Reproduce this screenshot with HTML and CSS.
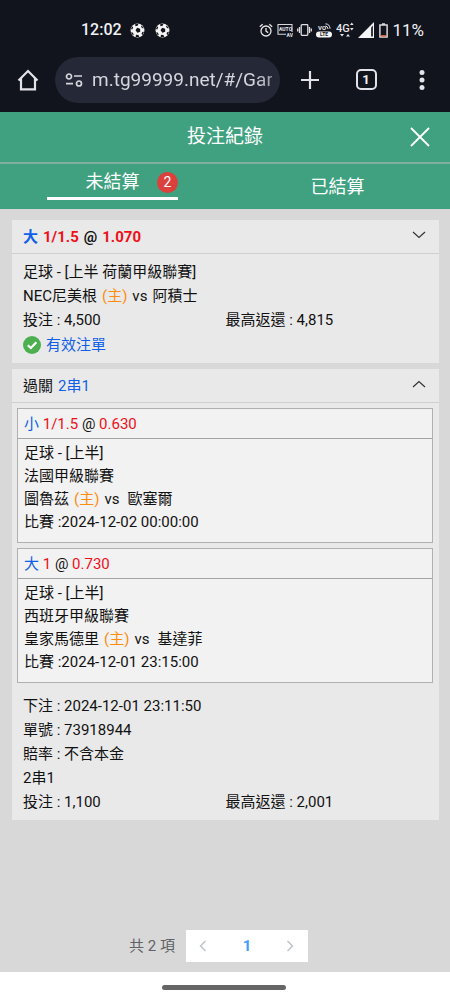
FILE: index.html
```html
<!DOCTYPE html>
<html lang="zh-Hant">
<head>
<meta charset="utf-8">
<meta name="viewport" content="width=device-width, initial-scale=1">
<title>投注紀錄</title>
<link rel="stylesheet" href="styles.css">
</head>
<body>
<svg class="defs" width="0" height="0" aria-hidden="true">
  <symbol id="ball" viewBox="0 0 16 16">
    <circle cx="8" cy="8" r="7.4" fill="#f4f4f4"/>
    <g fill="#11141c">
      <path d="M7.6 5.1 10.8 6 10.9 9.2 7.9 10.4 5.9 7.8z"/>
      <path d="M5.4 1.2 9 .9 8.1 3 5.8 3.4z"/>
      <path d="M12.4 2.6 14.8 5.6 13.3 5.7 11.7 4z"/>
      <path d="M15 9.3 13.2 13 12.3 11.4 13.2 9.6z"/>
      <path d="M6.4 12.6 9 12.9 9.9 15 6 15z"/>
      <path d="M1 9.9 2.8 10 4 12.2 3.2 13.4z"/>
      <path d="M.9 6.5 2.6 3.4 3.4 4.8 2.3 7z"/>
    </g>
  </symbol>
</svg>

<header class="device">
  <div class="status">
    <span class="status-time">12:02</span>
    <svg class="ball" width="15" height="15"><use href="#ball"/></svg>
    <svg class="ball" width="15" height="15"><use href="#ball"/></svg>
    <div class="status-icons">
      <svg width="14" height="15" viewBox="0 0 14 15" fill="none" stroke="#e8e8ec" stroke-width="1.3"><circle cx="7" cy="8" r="5"/><path d="M7 5v3.2l2.2 1.4M.8 3.8 3.7 1.3M13.2 3.8 10.3 1.3"/></svg>
      <svg width="16" height="14" viewBox="0 0 16 14"><path d="M9 11.3H1V1.500H15V9" fill="none" stroke="#d8d8dc" stroke-width="1.1"/><text x="2" y="8" class="tiny">AUTO</text><text x="9.500" y="13.500" class="tiny">AV</text></svg>
      <svg width="15" height="14" viewBox="0 0 15 14" fill="none" stroke="#e0e0e4" stroke-width="1.3"><rect x="4.200" y="1.700" width="6.600" height="10.600" rx=".8"/><path d="M2.500 4v6M12.500 4v6M.7 5.500v3M14.300 5.500v3"/></svg>
      <svg width="16" height="15" viewBox="0 0 16 15"><text x="2" y="7" class="volte">VO</text><path d="M9.500 .8a5 5 0 0 1 4.500 5M9.500 3a3 3 0 0 1 2.500 3" fill="none" stroke="#e8e8ec"/><rect x="0" y="8.500" width="16" height="6" rx="3" fill="#f4f4f6"/><text x="4" y="13.400" class="lte">LTE</text></svg>
      <svg width="18" height="16" viewBox="0 0 18 16"><text x="0" y="9.500" class="net">4G</text><path d="M15.800 .5l1.800 2.500h-3.600zM15.800 8.500l1.800-2.500h-3.600z" fill="#e8e8ec"/><path d="M4 12h4l-2 2.500zM10 14.500h4L12 12z" fill="#e8e8ec"/></svg>
      <svg width="17" height="16" viewBox="0 0 17 16"><path d="M0 16 16 0V16z" fill="#f4f4f6"/><path d="M13 5.500 15 3.500V14.500H13z" fill="#35373e"/></svg>
      <svg width="9" height="15" viewBox="0 0 9 15"><path d="M3 .3h3v1.500H3z" fill="#eee"/><rect x=".9" y="2" width="7.200" height="12" fill="none" stroke="#e8e8ec" stroke-width="1.400"/><path d="M1.600 12h5.800v1.400H1.600z" fill="#d9613b"/></svg>
      <span class="status-level">11%</span>
    </div>
  </div>
  <div class="toolbar">
    <button class="tool home" aria-label="Home"><svg width="22" height="22" viewBox="0 0 22 22" fill="none" stroke="#e2e2e8" stroke-width="2.200"><path d="M1.500 11.500 11 2l9.500 9.500M4 9.500V20.300H18V9.500"/></svg></button>
    <div class="address">
      <svg width="18" height="14" viewBox="0 0 18 14" fill="none" stroke="#d5d6de" stroke-width="1.700"><circle cx="4" cy="3.500" r="2.500"/><path d="M9 3h8M1 10.700h7"/><circle cx="14" cy="10.500" r="2.500"/></svg>
      <input class="url" type="text" value="m.tg99999.net/#/Game" aria-label="URL">
    </div>
    <button class="tool" aria-label="New tab"><svg width="20" height="20" viewBox="0 0 20 20" stroke="#e2e2e8" stroke-width="2.200"><path d="M10 1v18M1 10h18"/></svg></button>
    <button class="tool" aria-label="Tabs"><span class="tab-count">1</span></button>
    <button class="tool" aria-label="Menu"><svg width="6" height="20" viewBox="0 0 6 20" fill="#e2e2e8"><circle cx="3" cy="2.600" r="2.500"/><circle cx="3" cy="10" r="2.500"/><circle cx="3" cy="17.400" r="2.500"/></svg></button>
  </div>
</header>

<div class="title-bar">
  <h1 class="title">投注紀錄</h1>
  <button class="close" aria-label="關閉"><svg width="20" height="20" viewBox="0 0 20 20" stroke="#fff" stroke-width="1.800"><path d="M1 1l18 18M19 1 1 19"/></svg></button>
</div>
<nav class="tabs">
  <button class="tab active"><span class="tab-line">未結算<span class="badge">2</span></span></button>
  <button class="tab">已結算</button>
</nav>

<main class="records">
  <section class="card">
    <button class="card-head"><span class="pick"><span class="blue">大</span><span class="red">1/1.5</span><span>@</span><span class="red">1.070</span></span>
      <svg width="14" height="8" viewBox="0 0 14 8" fill="none" stroke="#333" stroke-width="1.200"><path d="M1 1l6 5.500L13 1"/></svg></button>
    <div class="card-body">
      <p>足球 - [上半 荷蘭甲級聯賽]</p>
      <p class="match"><span>NEC尼美根</span><span class="orange">(主)</span><span>vs</span><span>阿積士</span></p>
      <p class="split"><span>投注 : 4,500</span><span>最高返還 : 4,815</span></p>
      <p class="valid"><svg width="18" height="18" viewBox="0 0 18 18"><circle cx="9" cy="9" r="9" fill="#4caf50"/><path d="M4.800 9.300 7.800 12l5.600-5.800" fill="none" stroke="#fff" stroke-width="2.200"/></svg><span class="blue">有效注單</span></p>
    </div>
  </section>

  <section class="card">
    <button class="card-head"><span class="combo">過關<span class="blue">2串1</span></span>
      <svg width="14" height="8" viewBox="0 0 14 8" fill="none" stroke="#333" stroke-width="1.200"><path d="M1 7l6-5.500L13 7"/></svg></button>
    <div class="legs">
      <article class="leg">
        <p class="leg-head"><span class="blue">小</span> <span class="red">1/1.5</span> @ <span class="red">0.630</span></p>
        <div class="leg-body">
          <p>足球 - [上半]</p>
          <p>法國甲級聯賽</p>
          <p class="match"><span>圖魯茲</span><span class="orange">(主)</span><span>vs</span><span class="away">歐塞爾</span></p>
          <p>比賽 :2024-12-02 00:00:00</p>
        </div>
      </article>
      <article class="leg">
        <p class="leg-head"><span class="blue">大</span> <span class="red">1</span> @ <span class="red">0.730</span></p>
        <div class="leg-body">
          <p>足球 - [上半]</p>
          <p>西班牙甲級聯賽</p>
          <p class="match"><span>皇家馬德里</span><span class="orange">(主)</span><span>vs</span><span class="away">基達菲</span></p>
          <p>比賽 :2024-12-01 23:15:00</p>
        </div>
      </article>
    </div>
    <div class="card-body summary">
      <p>下注 : 2024-12-01 23:11:50</p>
      <p>單號 : 73918944</p>
      <p>賠率 : 不含本金</p>
      <p>2串1</p>
      <p class="split"><span>投注 : 1,100</span><span>最高返還 : 2,001</span></p>
    </div>
  </section>

  <nav class="pagination" aria-label="分頁">
    <span class="total">共 2 項</span>
    <div class="pager">
      <button aria-label="上一頁"><svg width="8" height="12" viewBox="0 0 8 12" fill="none" stroke="#c0c4cc" stroke-width="1.500"><path d="M6.500 1l-5 5 5 5"/></svg></button>
      <button class="current">1</button>
      <button aria-label="下一頁"><svg width="8" height="12" viewBox="0 0 8 12" fill="none" stroke="#c0c4cc" stroke-width="1.500"><path d="M1.500 1l5 5-5 5"/></svg></button>
    </div>
  </nav>
</main>
<footer class="gesture"><span class="gesture-bar"></span></footer>
</body>
</html>
```

FILE: styles.css
```css
* { box-sizing: border-box; }

body {
  margin: 0;
  min-height: 100vh;
  display: flex;
  flex-direction: column;
  background: #d8d8d8;
  color: #111;
  font: 15px/24px Roboto, "Noto Sans CJK TC", sans-serif;
}

p, h1 { margin: 0; }

button {
  margin: 0;
  padding: 0;
  border: 0;
  background: none;
  color: inherit;
  font: inherit;
}

svg { display: block; flex: none; }
.defs { position: absolute; }

.blue { color: #0f5fe8; }
.red { color: #ee1018; }
.orange { color: #ff8c10; }

/* Device status bar and browser toolbar */
.device {
  padding-top: 15px;
  background: #11141c;
  color: #f0f0f4;
}

.status {
  display: flex;
  align-items: center;
  height: 30px;
  padding: 0 26px 0 81px;
}

.status-time { font-size: 16px; font-weight: 500; margin-right: 8px; }
.ball { margin-right: 10px; }

.status-icons {
  display: flex;
  align-items: center;
  gap: 4px;
  margin-left: auto;
}

.status-level { font-size: 17px; }
.tiny { font: 700 5px Roboto, sans-serif; fill: #e8e8ec; }
.volte { font: 700 6px Roboto, sans-serif; fill: #e8e8ec; }
.lte { font: 700 5px Roboto, sans-serif; fill: #11141c; }
.net { font: 500 11px Roboto, sans-serif; fill: #e8e8ec; }

.toolbar {
  display: flex;
  align-items: center;
  height: 67px;
  padding-top: 2px;
}

.tool {
  display: flex;
  flex: 0 0 56px;
  align-items: center;
  justify-content: center;
  height: 48px;
}

.home { flex-basis: 55px; }

.address {
  display: flex;
  flex: 1;
  align-items: center;
  gap: 9px;
  min-width: 0;
  height: 46px;
  margin-right: 2px;
  padding: 0 8px 0 10px;
  border-radius: 23px;
  background: #252836;
}

.url {
  flex: 1;
  min-width: 0;
  padding: 0;
  border: 0;
  outline: 0;
  background: none;
  color: #d5d6de;
  font: 19px/24px Roboto, sans-serif;
  mask-image: linear-gradient(to right, #000 90%, #000a);
}

.tab-count {
  width: 21px;
  height: 21px;
  border: 2px solid #e2e2e8;
  border-radius: 5px;
  font-size: 13px;
  font-weight: 700;
  line-height: 17px;
  text-align: center;
}

/* Page header */
.title-bar {
  display: grid;
  grid-template-columns: 60px 1fr 60px;
  align-items: center;
  height: 52px;
  border-bottom: 2px solid #7fb09d;
  background: #40a180;
  color: #fff;
}

.title {
  grid-column: 2;
  font-size: 19px;
  font-weight: 400;
  text-align: center;
}

.close { display: flex; justify-content: center; }

.tabs {
  display: grid;
  grid-template-columns: 1fr 1fr;
  height: 45px;
  background: #40a180;
  color: #fff;
  font-size: 18px;
}

.tab.active {
  display: flex;
  align-items: flex-start;
  justify-content: center;
}

.tab-line {
  position: relative;
  width: 131px;
  height: 36px;
  border-bottom: 3px solid #fff;
  line-height: 36px;
}

.badge {
  position: absolute;
  top: 8px;
  right: 0;
  width: 21px;
  height: 21px;
  border-radius: 50%;
  background: #dc403c;
  font-size: 14px;
  line-height: 21px;
}

/* Bet records */
.records {
  display: flex;
  flex: 1;
  flex-direction: column;
  gap: 6px;
  padding: 11px 11px 10px 12px;
}

.card { background: #e9e9e9; }

.card-head {
  display: flex;
  align-items: flex-start;
  justify-content: space-between;
  width: 100%;
  height: 34px;
  padding: 5px 13px 0 11px;
  border-bottom: 1px solid #cfcfcf;
  text-align: left;
}

.card-head svg { margin-top: 6px; }
.pick { display: flex; gap: 5px; font-weight: 700; }
.combo { display: flex; gap: 5px; }

.card-body { padding: 6px 11px; }

.match { display: flex; gap: 5px; }

.split { display: grid; grid-template-columns: 1fr 1fr; }

.valid {
  display: flex;
  align-items: center;
  gap: 5px;
  padding-top: 1px;
}

.legs {
  display: grid;
  gap: 5px;
  padding: 5px 6px 0 5px;
}

.leg {
  border: 1px solid #b0b0b0;
  background: #f2f2f2;
}

.leg-head {
  height: 30px;
  padding: 3px 6px;
  border-bottom: 1px solid #a3a3a3;
}

.leg-body {
  padding: 3px 6px 8px;
  line-height: 23px;
}

.leg-body .away { margin-left: 3px; }

.summary { padding: 11px 11px 6px; }

.pagination {
  display: flex;
  align-items: center;
  justify-content: center;
  gap: 11px;
  margin-top: auto;
  padding-right: 14px;
}

.total { color: #606266; }

.pager {
  display: grid;
  grid-template-columns: 35px 52px 35px;
  height: 32px;
  background: #fff;
}

.pager button {
  display: flex;
  align-items: center;
  justify-content: center;
}

.pager .current { color: #409eff; font-weight: 700; }

.gesture {
  display: flex;
  justify-content: center;
  height: 28px;
  padding: 13px 3px 0 0;
  background: #fff;
}

.gesture-bar {
  width: 124px;
  height: 5px;
  border-radius: 3px;
  background: #666;
}
```
